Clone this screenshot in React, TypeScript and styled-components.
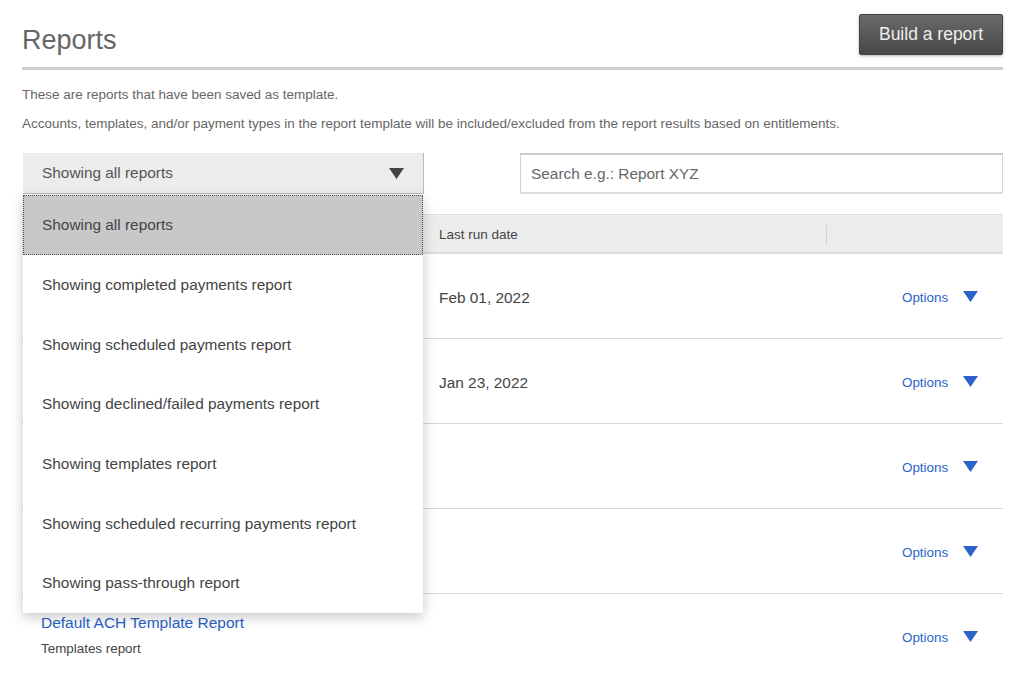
import React from 'react'
import styled, { createGlobalStyle } from 'styled-components'

const GlobalStyle = createGlobalStyle`
  html, body {
    margin: 0;
    background: #fff;
    overflow: hidden;
  }
  body {
    font-family: "Liberation Sans", Arial, sans-serif;
    color: #444;
  }
`

const Page = styled.div`
  height: 674px;
  padding: 14px 21px 0 22px;
  box-sizing: border-box;
  overflow: hidden;
`

const Header = styled.header`
  display: flex;
  justify-content: space-between;
  align-items: flex-start;
  height: 53px;
  border-bottom: 3px solid #ccc;
`

const Title = styled.h1`
  margin: 9px 0 0;
  font-size: 27px;
  line-height: 34px;
  font-weight: 400;
  color: #666;
`

const BuildButton = styled.button`
  width: 144px;
  height: 41px;
  padding: 0;
  border: 1px solid #444;
  border-radius: 2px;
  background: linear-gradient(#6a6a6a, #474747);
  box-shadow: 0 1px 3px rgba(0, 0, 0, 0.3);
  color: #eee;
  font: 400 17.5px "Liberation Sans", Arial, sans-serif;
`

const Intro = styled.p`
  margin: 0;
  font-size: 13.49px;
  line-height: 16px;
  color: #666;
  margin-top: ${p => p.$top}px;
`

const Filters = styled.div`
  display: flex;
  justify-content: space-between;
  align-items: flex-start;
  margin-top: 21px;
  padding-left: 1px;
`

const SelectWrap = styled.div`
  position: relative;
  width: 401px;
`

const SelectBox = styled.div`
  display: flex;
  justify-content: space-between;
  align-items: center;
  height: 41px;
  padding: 0 19px 0 19px;
  box-sizing: border-box;
  background: #ececec;
  border-right: 1px solid #bbb;
  border-bottom: 1px solid #bbb;
  font-size: 15.4px;
  color: #555;
`

const Menu = styled.ul`
  position: absolute;
  top: 42px;
  left: 0;
  width: 400px;
  margin: 0;
  padding: 0;
  list-style: none;
  background: #fff;
  box-shadow: 0 4px 12px rgba(0, 0, 0, 0.22);
  z-index: 2;
`

const MenuItem = styled.li`
  display: flex;
  align-items: center;
  height: ${p => (p.$active ? 60 : 59.7)}px;
  padding-left: 19px;
  box-sizing: border-box;
  font-size: 15.4px;
  color: #444;
  background: ${p => (p.$active ? '#c8c8c8' : '#fff')};
  outline: ${p => (p.$active ? '1px dotted #555' : 'none')};
  outline-offset: -1px;
`

const Search = styled.input`
  width: 483px;
  height: 41px;
  padding: 0 10px;
  box-sizing: border-box;
  border: 1px solid #d4d4d4;
  border-top: 2px solid #ccc;
  border-bottom: 2px solid #ddd;
  background: #fff;
  font: 400 15.4px "Liberation Sans", Arial, sans-serif;
  color: #666;
  &::placeholder {
    color: #666;
    opacity: 1;
  }
`

const Table = styled.div`
  margin-top: 20px;
`

const Row = styled.div`
  display: grid;
  grid-template-columns: 417px 388px 176px;
  align-items: center;
  height: 85px;
  padding-top: 4px;
  box-sizing: border-box;
  border-bottom: 1px solid #d8d8d8;
`

const HeadRow = styled(Row)`
  height: 40px;
  padding-top: 2px;
  background: #ececec;
  border-top: 1px solid #e0e0e0;
  border-bottom: 2px solid #ddd;
  font-size: 13.5px;
  color: #444;
`

const HeadCell = styled.div`
  height: 20px;
  line-height: 20px;
  border-right: ${p => (p.$divider ? '1px solid #d4d4d4' : 'none')};
`

const NameCell = styled.div`
  padding: 0 0 7px 19px;
`

const ReportLink = styled.a`
  display: block;
  font-size: 15.5px;
  line-height: 20px;
  color: #2a5fc9;
`

const ReportType = styled.div`
  margin-top: 8px;
  font-size: 13.4px;
  line-height: 16px;
  color: #444;
`

const DateCell = styled.div`
  font-size: 15.4px;
  color: #444;
`

const OptionsCell = styled.div`
  display: flex;
  align-items: center;
  gap: 15px;
  padding: 0 0 2px 75px;
  font-size: 13.4px;
  color: #2a63c9;
  svg {
    margin-bottom: 2px;
  }
`

const Caret = ({ color }: { color: string }) => (
  <svg width="15" height="11" viewBox="0 0 15 11">
    <path d="M0 0h15L7.5 11z" fill={color} />
  </svg>
)

const menuItems = [
  'Showing all reports',
  'Showing completed payments report',
  'Showing scheduled payments report',
  'Showing declined/failed payments report',
  'Showing templates report',
  'Showing scheduled recurring payments report',
  'Showing pass-through report',
]

const rows = [
  { date: 'Feb 01, 2022' },
  { date: 'Jan 23, 2022' },
  {},
  {},
  { name: 'Default ACH Template Report', type: 'Templates report' },
] as { date?: string; name?: string; type?: string }[]

const App: React.FC = () => {
  return (
    <Page>
      <GlobalStyle />
      <Header>
        <Title>Reports</Title>
        <BuildButton>Build a report</BuildButton>
      </Header>
      <Intro $top={17}>These are reports that have been saved as template.</Intro>
      <Intro $top={13}>
        Accounts, templates, and/or payment types in the report template will be included/excluded from the report results based on entitlements.
      </Intro>
      <Filters>
        <SelectWrap>
          <SelectBox>
            Showing all reports
            <Caret color="#444" />
          </SelectBox>
          <Menu>
            {menuItems.map((item, i) => (
              <MenuItem key={item} $active={i === 0}>
                {item}
              </MenuItem>
            ))}
          </Menu>
        </SelectWrap>
        <Search placeholder="Search e.g.: Report XYZ" />
      </Filters>
      <Table>
        <HeadRow>
          <div />
          <HeadCell $divider>Last run date</HeadCell>
          <div />
        </HeadRow>
        {rows.map((row, i) => (
          <Row key={i}>
            <NameCell>
              {row.name && <ReportLink>{row.name}</ReportLink>}
              {row.type && <ReportType>{row.type}</ReportType>}
            </NameCell>
            <DateCell>{row.date}</DateCell>
            <OptionsCell>
              Options
              <Caret color="#2a63c9" />
            </OptionsCell>
          </Row>
        ))}
      </Table>
    </Page>
  )
}

export default App
